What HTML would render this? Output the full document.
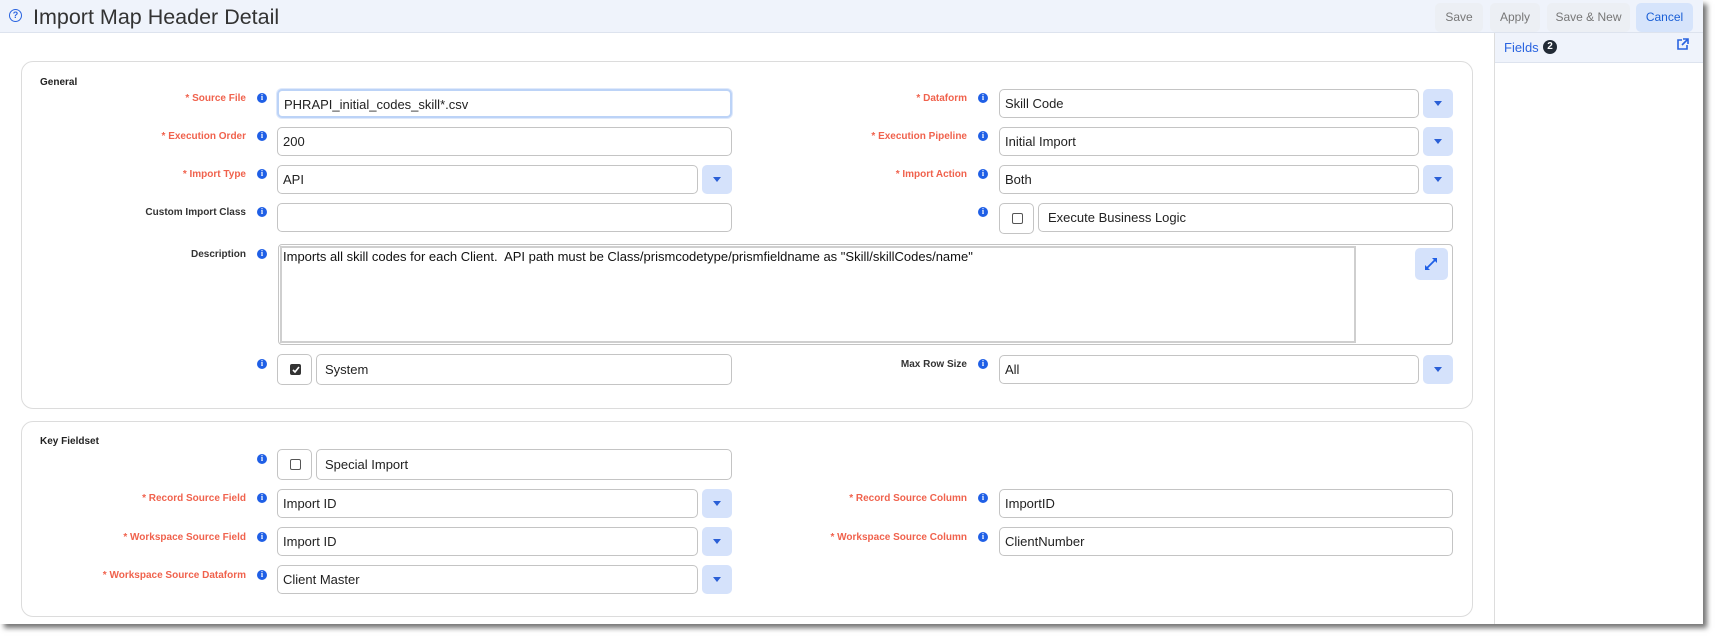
<!DOCTYPE html>
<html><head><meta charset="utf-8">
<style>
*{box-sizing:border-box;margin:0;padding:0}
body{width:1718px;height:637px;background:#fff;font-family:"Liberation Sans",Arial,sans-serif;position:relative;overflow:hidden}
.page{position:absolute;left:0;top:0;width:1703px;height:624px;background:#fff;box-shadow:4px 4px 5px rgba(0,0,0,.55)}
.hdr{position:absolute;left:0;top:0;width:1703px;height:33px;background:#eff3fb;border-bottom:1px solid #dde3ee}
.title{position:absolute;left:33px;top:5px;font-size:21.5px;color:#333}
.help{position:absolute;left:9px;top:9px;width:13px;height:13px;border:1.5px solid #2a64e0;border-radius:50%;color:#2a64e0;font-size:9px;font-weight:bold;text-align:center;line-height:10px}
.btn{position:absolute;top:3px;height:29px;border-radius:5px;background:#eceff4;color:#777;font-size:12px;text-align:center;line-height:29px}
.panel{position:absolute;left:1494px;top:33px;width:209px;height:591px;border-left:1px solid #ddd;background:#fff}
.phdr{position:absolute;left:0;top:0;width:208px;height:30px;background:#eff3fb;border-bottom:1px solid #dde3ee}
.card{position:absolute;left:21px;width:1452px;border:1px solid #dcdcdc;border-radius:12px;background:#fff}
.sec{position:absolute;left:40px;font-size:10px;font-weight:bold;color:#222}
.lbl{position:absolute;font-size:10px;font-weight:bold;text-align:right;white-space:nowrap}
.req{color:#f0624d}.plain{color:#333}
.ic{position:absolute;width:10px;height:10px;border-radius:50%;background:#1f5fe6;color:#fff;font-size:8px;font-weight:bold;line-height:10px;text-align:center;font-family:"Liberation Serif",serif}
.in{position:absolute;height:29px;border:1px solid #c4c4c4;border-radius:5px;background:#fff;font-size:13px;color:#222;padding-left:5px;line-height:27px;white-space:nowrap}
.dd{position:absolute;width:30px;height:29px;border-radius:5px;background:#d5e2fb}
.dd:after{content:"";position:absolute;left:11px;top:12px;border-left:4px solid transparent;border-right:4px solid transparent;border-top:5px solid #2a5fd6}
.cb{position:absolute;width:35px;height:31px;border:1px solid #c4c4c4;border-radius:5px;background:#fff}
.cb i{position:absolute;left:12px;top:9px;width:11px;height:11px;border:1px solid #555;border-radius:2px}
.cb i.on{background:#333;border-color:#333}
.L{right:1457px}.R{right:736px}
</style></head><body>
<div class="page">
<div class="hdr">
 <div class="help">?</div>
 <div class="title">Import Map Header Detail</div>
 <div class="btn" style="left:1435px;width:48px">Save</div>
 <div class="btn" style="left:1490px;width:50px">Apply</div>
 <div class="btn" style="left:1547px;width:83px">Save &amp; New</div>
 <div class="btn" style="left:1636px;width:57px;background:#d6e4fb;color:#1a5fd6">Cancel</div>
</div>
<div class="panel"><div class="phdr">
 <div style="position:absolute;left:9px;top:7px;font-size:13px;color:#2a64e0">Fields</div>
 <div style="position:absolute;left:48px;top:7px;width:14px;height:14px;border-radius:50%;background:#222b36;color:#fff;font-size:10px;font-weight:bold;text-align:center;line-height:14px">2</div>
 <svg style="position:absolute;left:181px;top:5px" width="13" height="13" viewBox="0 0 13 13" fill="none" stroke="#2a64e0" stroke-width="1.6"><path d="M6 2H2v9h9V7"/><path d="M7 1h5v5M12 1L6 7"/></svg>
</div></div>

<div class="card" style="top:61px;height:348px"></div>
<div class="sec" style="top:77px">General</div>

<div class="lbl req L" style="top:93px">* Source File</div><div class="ic" style="left:257px;top:93px">i</div>
<div class="in" style="left:277px;top:89px;width:455px;border:2px solid #bcd3f7;box-shadow:0 0 0 1px #dfe9fb">PHRAPI_initial_codes_skill*.csv</div>
<div class="lbl req R" style="top:93px">* Dataform</div><div class="ic" style="left:978px;top:93px">i</div>
<div class="in" style="left:999px;top:89px;width:420px">Skill Code</div><div class="dd" style="left:1423px;top:89px"></div>

<div class="lbl req L" style="top:131px">* Execution Order</div><div class="ic" style="left:257px;top:131px">i</div>
<div class="in" style="left:277px;top:127px;width:455px">200</div>
<div class="lbl req R" style="top:131px">* Execution Pipeline</div><div class="ic" style="left:978px;top:131px">i</div>
<div class="in" style="left:999px;top:127px;width:420px">Initial Import</div><div class="dd" style="left:1423px;top:127px"></div>

<div class="lbl req L" style="top:169px">* Import Type</div><div class="ic" style="left:257px;top:169px">i</div>
<div class="in" style="left:277px;top:165px;width:421px">API</div><div class="dd" style="left:702px;top:165px"></div>
<div class="lbl req R" style="top:169px">* Import Action</div><div class="ic" style="left:978px;top:169px">i</div>
<div class="in" style="left:999px;top:165px;width:420px">Both</div><div class="dd" style="left:1423px;top:165px"></div>

<div class="lbl plain L" style="top:207px">Custom Import Class</div><div class="ic" style="left:257px;top:207px">i</div>
<div class="in" style="left:277px;top:203px;width:455px"></div>
<div class="ic" style="left:978px;top:207px">i</div>
<div class="cb" style="left:999px;top:203px"><i></i></div>
<div class="in" style="left:1038px;top:203px;width:415px;padding-left:9px">Execute Business Logic</div>

<div class="lbl plain L" style="top:249px">Description</div><div class="ic" style="left:257px;top:249px">i</div>
<div class="in" style="left:278px;top:244px;width:1175px;height:101px;border-radius:4px"></div>
<div style="position:absolute;left:280px;top:246px;width:1076px;height:97px;border:2px solid #cfcfcf;font-size:13px;color:#111;padding:2px 0 0 1px;line-height:14px;white-space:nowrap">Imports all skill codes for each Client.&nbsp; API path must be Class/prismcodetype/prismfieldname as "Skill/skillCodes/name"</div>
<div style="position:absolute;left:1415px;top:248px;width:33px;height:32px;border-radius:5px;background:#d5e2fb"><svg style="position:absolute;left:9px;top:9px" width="14" height="14" viewBox="0 0 14 14" fill="#1f5fe6" stroke="#1f5fe6" stroke-width="1.8"><path d="M3 11L11 3" /><path d="M8 1h5v5z" stroke-width="0"/><path d="M1 8v5h5z" stroke-width="0"/></svg></div>

<div class="ic" style="left:257px;top:359px">i</div>
<div class="cb" style="left:277px;top:354px"><i class="on"><svg style="position:absolute;left:1px;top:1px" width="8" height="8" viewBox="0 0 8 8" fill="none" stroke="#fff" stroke-width="1.6"><path d="M1 4l2 2 4-5"/></svg></i></div>
<div class="in" style="left:316px;top:354px;width:416px;height:31px;padding-left:8px;line-height:29px">System</div>
<div class="lbl plain R" style="top:359px">Max Row Size</div><div class="ic" style="left:978px;top:359px">i</div>
<div class="in" style="left:999px;top:355px;width:420px">All</div><div class="dd" style="left:1423px;top:355px"></div>

<div class="card" style="top:421px;height:196px"></div>
<div class="sec" style="top:436px">Key Fieldset</div>

<div class="ic" style="left:257px;top:454px">i</div>
<div class="cb" style="left:277px;top:449px"><i></i></div>
<div class="in" style="left:316px;top:449px;width:416px;height:31px;padding-left:8px;line-height:29px">Special Import</div>

<div class="lbl req L" style="top:493px">* Record Source Field</div><div class="ic" style="left:257px;top:493px">i</div>
<div class="in" style="left:277px;top:489px;width:421px">Import ID</div><div class="dd" style="left:702px;top:489px"></div>
<div class="lbl req R" style="top:493px">* Record Source Column</div><div class="ic" style="left:978px;top:493px">i</div>
<div class="in" style="left:999px;top:489px;width:454px">ImportID</div>

<div class="lbl req L" style="top:532px">* Workspace Source Field</div><div class="ic" style="left:257px;top:532px">i</div>
<div class="in" style="left:277px;top:527px;width:421px">Import ID</div><div class="dd" style="left:702px;top:527px"></div>
<div class="lbl req R" style="top:532px">* Workspace Source Column</div><div class="ic" style="left:978px;top:532px">i</div>
<div class="in" style="left:999px;top:527px;width:454px">ClientNumber</div>

<div class="lbl req L" style="top:570px">* Workspace Source Dataform</div><div class="ic" style="left:257px;top:570px">i</div>
<div class="in" style="left:277px;top:565px;width:421px">Client Master</div><div class="dd" style="left:702px;top:565px"></div>
</div>
</body></html>
